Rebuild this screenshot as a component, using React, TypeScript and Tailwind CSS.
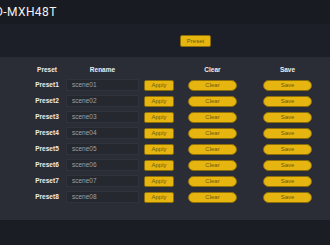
const rows = [1, 2, 3, 4, 5, 6, 7, 8];

const btn =
  "h-[11px] flex items-center justify-center bg-[#e6b50f] border border-[#8c6e08] text-[#6e5a10] text-[6px] leading-none";

export default function App() {
  return (
    <div className="w-[330px] h-[245px] bg-[#1a1d24] font-['Liberation_Sans',Arial,sans-serif] overflow-hidden">
      <div className="h-[24px] bg-[#181b22] flex items-center overflow-hidden">
        <span className="ml-[-5px] text-[#f2f2f2] text-[12px] font-normal font-['Roboto',sans-serif] tracking-[0.4px]">
          D-MXH48T
        </span>
      </div>
      <div className="h-[33px] bg-[#1c1f27] flex items-center">
        <div className={`${btn} ml-[180px] w-[31px] h-[12px] rounded-[2px] text-[6.5px]`}>Preset</div>
      </div>
      <div className="bg-[#2a2d35] pt-[6px] pb-[15px]">
        <div className="flex items-center h-[14px] text-[#eeeeee] text-[6.5px] font-bold pl-[30px]">
          <div className="w-[34px] text-center">Preset</div>
          <div className="w-[73px] ml-[2px] text-center">Rename</div>
          <div className="w-[30px] ml-[5px]" />
          <div className="w-[49px] ml-[14px] text-center">Clear</div>
          <div className="w-[49px] ml-[26px] text-center">Save</div>
        </div>
        {rows.map((n) => (
          <div key={n} className="flex items-center h-[16px] pl-[30px]">
            <div className="w-[34px] text-center text-[#eeeeee] text-[6.5px] font-bold">Preset{n}</div>
            <div className="w-[73px] h-[12px] ml-[2px] bg-[#25282f] border border-[#30333b] flex items-center pl-[5px] text-[#9ea1a7] text-[6.5px]">
              scene0{n}
            </div>
            <div className={`${btn} w-[30px] ml-[5px] rounded-[2px]`}>Apply</div>
            <div className={`${btn} w-[49px] ml-[14px] rounded-full`}>Clear</div>
            <div className={`${btn} w-[49px] ml-[26px] rounded-full`}>Save</div>
          </div>
        ))}
      </div>
    </div>
  );
}
